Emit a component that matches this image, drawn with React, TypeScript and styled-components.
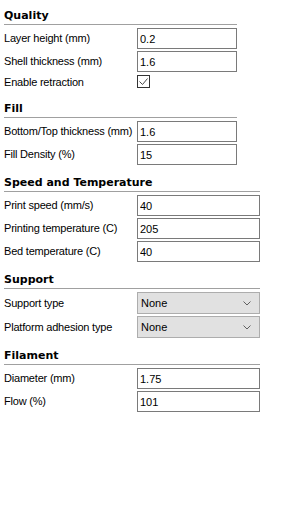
import React from "react";
import styled, { createGlobalStyle } from "styled-components";

const GlobalStyle = createGlobalStyle`
  body {
    margin: 0;
    background: #ffffff;
    font-family: "Liberation Sans", Arial, sans-serif;
    font-size: 11px;
    color: #000000;
  }
`;

const Panel = styled.div`
  display: flex;
  flex-direction: column;
  gap: 11px;
  padding: 9px 0 0 4px;
`;

const Section = styled.section<{ $field: number }>`
  width: ${(p) => 133 + p.$field}px;
`;

const Title = styled.h2`
  margin: 0;
  padding-bottom: 2px;
  border-bottom: 1px solid #a0a0a0;
  font-family: "DejaVu Sans", Verdana, sans-serif;
  font-size: 11px;
  font-weight: bold;
  line-height: 13px;
  color: #000000;
`;

const Rows = styled.div<{ $field: number }>`
  display: grid;
  grid-template-columns: 133px ${(p) => p.$field}px;
  row-gap: 2px;
  margin-top: 3px;
  align-items: center;
`;

const Label = styled.span`
  line-height: 13px;
  letter-spacing: -0.2px;
  white-space: nowrap;
  color: #000000;
`;

const TextBox = styled.input`
  box-sizing: border-box;
  width: 100%;
  height: 21px;
  margin: 0;
  padding: 0 2px;
  border: 1px solid #7a7a7a;
  background: #ffffff;
  font-family: "Liberation Sans", Arial, sans-serif;
  font-size: 11px;
  color: #000000;
  outline: none;
`;

const Choice = styled.div`
  box-sizing: border-box;
  display: flex;
  align-items: center;
  justify-content: space-between;
  height: 22px;
  padding: 0 8px 0 3px;
  border: 1px solid #adadad;
  background: #e1e1e1;
  color: #000000;
`;

const CheckBox = styled.span`
  box-sizing: border-box;
  display: flex;
  align-items: center;
  justify-content: center;
  width: 13px;
  height: 13px;
  margin: 1px 0 3px;
  border: 1px solid #333333;
  background: #ffffff;
`;

type Field =
  | { kind: "text"; label: string; value: string }
  | { kind: "check"; label: string }
  | { kind: "choice"; label: string; value: string };

type Group = { title: string; field: number; items: Field[] };

const groups: Group[] = [
  {
    title: "Quality",
    field: 100,
    items: [
      { kind: "text", label: "Layer height (mm)", value: "0.2" },
      { kind: "text", label: "Shell thickness (mm)", value: "1.6" },
      { kind: "check", label: "Enable retraction" },
    ],
  },
  {
    title: "Fill",
    field: 100,
    items: [
      { kind: "text", label: "Bottom/Top thickness (mm)", value: "1.6" },
      { kind: "text", label: "Fill Density (%)", value: "15" },
    ],
  },
  {
    title: "Speed and Temperature",
    field: 123,
    items: [
      { kind: "text", label: "Print speed (mm/s)", value: "40" },
      { kind: "text", label: "Printing temperature (C)", value: "205" },
      { kind: "text", label: "Bed temperature (C)", value: "40" },
    ],
  },
  {
    title: "Support",
    field: 123,
    items: [
      { kind: "choice", label: "Support type", value: "None" },
      { kind: "choice", label: "Platform adhesion type", value: "None" },
    ],
  },
  {
    title: "Filament",
    field: 123,
    items: [
      { kind: "text", label: "Diameter (mm)", value: "1.75" },
      { kind: "text", label: "Flow (%)", value: "101" },
    ],
  },
];

function Control({ item }: { item: Field }) {
  if (item.kind === "check") {
    return (
      <CheckBox>
        <svg width="11" height="11" viewBox="0 0 11 11">
          <path d="M1.5 5.5 L4.5 8.5 L9.5 2.5" fill="none" stroke="#4a4a4a" strokeWidth="1" />
        </svg>
      </CheckBox>
    );
  }
  if (item.kind === "choice") {
    return (
      <Choice>
        <span>{item.value}</span>
        <svg width="8" height="5" viewBox="0 0 8 5">
          <path d="M0.5 0.5 L4 4 L7.5 0.5" fill="none" stroke="#606060" strokeWidth="1" />
        </svg>
      </Choice>
    );
  }
  return <TextBox defaultValue={item.value} />;
}

function App() {
  return (
    <>
      <GlobalStyle />
      <Panel>
        {groups.map((g) => (
          <Section key={g.title} $field={g.field}>
            <Title>{g.title}</Title>
            <Rows $field={g.field}>
              {g.items.map((item) => (
                <React.Fragment key={item.label}>
                  <Label>{item.label}</Label>
                  <Control item={item} />
                </React.Fragment>
              ))}
            </Rows>
          </Section>
        ))}
      </Panel>
    </>
  );
}

export default App;
